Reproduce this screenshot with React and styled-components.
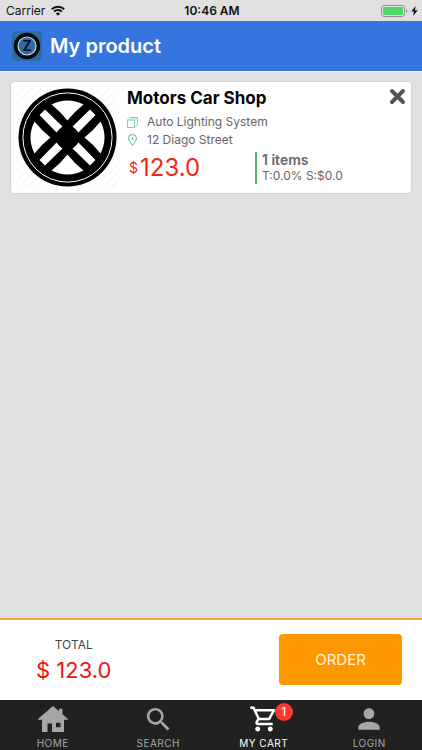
import React from 'react';
import styled, { createGlobalStyle } from 'styled-components';
import { MdOutlineShoppingCart, MdPerson, MdSearch } from 'react-icons/md';

const GlobalStyle = createGlobalStyle`
  * {
    box-sizing: border-box;
  }

  body {
    margin: 0;
    background-color: #e0e0e0;
    font-family: Inter, 'Liberation Sans', sans-serif;
  }
`;

// Mock data for the cart
const cartItems = [
  {
    id: 1,
    name: 'Motors Car Shop',
    category: 'Auto Lighting System',
    address: '12 Diago Street',
    price: 123,
    quantity: 1,
    tax: 0,
    shipping: 0,
  },
];

const Screen = styled.div`
  display: flex;
  flex-direction: column;
  min-height: 100vh;
`;

const StatusBar = styled.div`
  display: grid;
  grid-template-columns: 1fr auto 1fr;
  align-items: center;
  height: 21px;
  padding: 0 4px 0 6px;
  color: #111;
  font-size: 12px;
`;

const StatusGroup = styled.div`
  display: flex;
  align-items: center;
  justify-content: ${(props) => (props.$end ? 'flex-end' : 'flex-start')};
  gap: ${(props) => (props.$end ? '3px' : '6px')};
`;

const Clock = styled.span`
  font-weight: 600;
`;

const Header = styled.header`
  display: flex;
  align-items: center;
  gap: 8px;
  height: 51px;
  padding: 0 12px;
  background-color: #3575e0;
  border-bottom: 1px solid #f0f0f4;
`;

const Title = styled.h1`
  margin: 0;
  color: white;
  font-size: 20px;
  font-weight: 600;
`;

const Content = styled.main`
  flex: 1;
  padding: 10px 11px;
`;

const CardList = styled.ul`
  display: flex;
  flex-direction: column;
  gap: 10px;
  margin: 0;
  padding: 0;
  list-style: none;
`;

const Card = styled.li`
  display: flex;
  gap: 10px;
  padding: 6px 5px 6px 7px;
  background-color: white;
  border-radius: 4px;
  box-shadow: 0 0 1px 1px rgba(0, 0, 0, 0.06);
`;

const CardBody = styled.div`
  display: flex;
  flex: 1;
  flex-direction: column;
`;

const CardTop = styled.div`
  display: flex;
  align-items: flex-start;
  justify-content: space-between;
`;

const ProductName = styled.h2`
  margin: 0;
  color: #080808;
  font-size: 17px;
  font-weight: 700;
  line-height: 20px;
`;

const RemoveButton = styled.button`
  display: flex;
  padding: 0;
  border: 0;
  background: none;
  cursor: pointer;
`;

const InfoList = styled.div`
  display: flex;
  flex-direction: column;
  padding-top: 5px;
`;

const InfoRow = styled.div`
  display: flex;
  align-items: center;
  gap: 9px;
  color: #666;
  font-size: 12px;
  line-height: 18px;
`;

const PriceRow = styled.div`
  display: grid;
  grid-template-columns: 128px 1fr;
  align-items: center;
  padding-top: 3px;
`;

const Price = styled.div`
  display: flex;
  align-items: center;
  gap: 2px;
  padding-left: 2px;
  color: #f22613;
  font-size: 24px;
  line-height: 32px;
`;

const Currency = styled.span`
  font-size: 14px;
`;

const Quantity = styled.div`
  padding-left: 5px;
  border-left: 2px solid #5cb574;
  color: #666;
  font-size: 12px;
  line-height: 16px;
`;

const QuantityCount = styled.strong`
  display: block;
  font-size: 14px;
  font-weight: 600;
`;

const Summary = styled.section`
  display: flex;
  align-items: flex-start;
  justify-content: space-between;
  height: 82px;
  padding: 14px 20px 0 36px;
  background-color: white;
  border-top: 2px solid #f5a343;
`;

const Total = styled.div`
  display: flex;
  flex-direction: column;
  align-items: center;
  padding-top: 2px;
`;

const TotalLabel = styled.span`
  color: #444;
  font-size: 12px;
  line-height: 18px;
`;

const TotalAmount = styled.span`
  color: #f01414;
  font-size: 22px;
  line-height: 32px;
`;

const OrderButton = styled.button`
  width: 123px;
  height: 51px;
  border: 0;
  border-radius: 4px;
  background-color: #ff9800;
  color: #fff3dc;
  font-family: inherit;
  font-size: 15px;
  cursor: pointer;
`;

const TabBar = styled.nav`
  display: grid;
  grid-template-columns: repeat(4, 1fr);
  height: 50px;
  background-color: #212121;
`;

const Tab = styled.a`
  display: flex;
  flex-direction: column;
  align-items: center;
  padding-top: 3px;
  color: ${(props) => (props.$active ? 'white' : '#a6a6a6')};
  font-size: 10px;
  letter-spacing: 0.5px;
  line-height: 16px;
  text-decoration: none;
`;

const TabIcon = styled.span`
  position: relative;
  display: flex;
  align-items: center;
  justify-content: center;
  height: 32px;
`;

const Badge = styled.span`
  position: absolute;
  top: 0;
  right: -14px;
  width: 18px;
  height: 18px;
  border-radius: 9px;
  background-color: #f93a32;
  color: white;
  font-size: 12px;
  letter-spacing: 0;
  line-height: 18px;
  text-align: center;
`;

function WifiIcon() {
  return (
    <svg width="14" height="11" viewBox="0 0 14 11" fill="none" stroke="#111" strokeWidth="2">
      <path d="M0.8 4.2a8.8 8.8 0 0 1 12.4 0" />
      <path d="M3.1 6.6a5.5 5.5 0 0 1 7.8 0" />
      <path d="M7 10.8L4.8 8.6a3.1 3.1 0 0 1 4.4 0z" fill="#111" stroke="none" />
    </svg>
  );
}

function BatteryIcon() {
  return (
    <svg width="27" height="12" viewBox="0 0 27 12">
      <rect x="0.5" y="0.5" width="23" height="11" rx="2.5" fill="#e8e8e8" stroke="#919191" />
      <rect x="2" y="2" width="20" height="8" rx="1" fill="#4cd964" />
      <path d="M25 4v4c1.8-.6 1.8-3.4 0-4z" fill="#919191" />
    </svg>
  );
}

function BoltIcon() {
  return (
    <svg width="7" height="10" viewBox="0 0 7 10" fill="#111">
      <path d="M4.6 0L0.3 5.6h2.7L2.2 10l4.5-5.8H3.9z" />
    </svg>
  );
}

function Logo() {
  return (
    <svg width="30" height="30" viewBox="0 0 30 30">
      <rect width="30" height="30" rx="4" fill="#2e6da4" />
      <circle cx="15" cy="15" r="13.2" fill="#05070c" />
      <circle cx="15" cy="15" r="9" fill="#2f6ba3" stroke="#c4d8ea" strokeWidth="1.2" />
      <text
        x="15"
        y="20"
        fill="#02050a"
        fontFamily="Inter, sans-serif"
        fontSize="14"
        fontWeight="600"
        textAnchor="middle"
      >
        Z
      </text>
    </svg>
  );
}

function WheelImage() {
  return (
    <svg width="99" height="99" viewBox="-49.5 -49.5 99 99" role="img" aria-label="Wheel">
      <defs>
        <pattern
          id="stripes"
          width="6"
          height="6"
          patternUnits="userSpaceOnUse"
          patternTransform="rotate(45)"
        >
          <rect width="6" height="6" fill="#fff" />
          <rect width="1" height="6" fill="#f4f4f4" />
        </pattern>
      </defs>
      <rect x="-49.5" y="-49.5" width="99" height="99" fill="url(#stripes)" />
      <circle r="49" fill="#000" />
      <circle r="44.6" fill="none" stroke="#fff" strokeWidth="1" />
      {[0, 90, 180, 270].map((angle) => (
        <g key={angle} transform={`rotate(${angle})`} fill="#fff">
          <path d="M0 -17Q-6.5 -25.5 -16 -33Q0 -41 16 -33Q6.5 -25.5 0 -17z" />
          <path d="M-28 -22.5L-22.5 -28L-5 -11Q-8.5 -8.5 -11 -5z" />
        </g>
      ))}
    </svg>
  );
}

function CloseIcon() {
  return (
    <svg width="17" height="17" viewBox="0 0 17 17" stroke="#555" strokeWidth="4" strokeLinecap="round">
      <path d="M3 3l11 11M14 3L3 14" />
    </svg>
  );
}

function BoxIcon() {
  return (
    <svg width="11" height="11" viewBox="0 0 11 11" fill="none" stroke="#6fcf97" strokeWidth="0.9">
      <path d="M0.5 3h7v7.5h-7zM0.5 3l2.5-2.5h7.5L7.5 3M10.5 0.5v7.5l-3 2.5M4.5 3l2.5-2.5" />
    </svg>
  );
}

function PinIcon() {
  return (
    <svg width="11" height="12" viewBox="0 0 11 12" fill="none" stroke="#3cb878" strokeWidth="0.9">
      <path d="M5.5 11.4C3.5 8.5 1.5 6.5 1.5 4.5a4 4 0 0 1 8 0c0 2-2 4-4 6.9z" />
      <circle cx="5.5" cy="4.5" r="1" fill="#3cb878" stroke="none" />
    </svg>
  );
}

function HomeIcon() {
  return (
    <svg width="30" height="26" viewBox="0 0 30 26" fill="currentColor">
      <path
        fillRule="evenodd"
        d="M15 0l6 5.2V2.8h3.5v5.5L30 13v.8h-4V26H14v-8.5H9.5V26H4V13.8H0V13zM18 16.8v4.5h4.5v-4.5z"
      />
    </svg>
  );
}

function CartItem({ item }) {
  return (
    <Card>
      <WheelImage />
      <CardBody>
        <CardTop>
          <ProductName>{item.name}</ProductName>
          <RemoveButton type="button" aria-label={`Remove ${item.name}`}>
            <CloseIcon />
          </RemoveButton>
        </CardTop>
        <InfoList>
          <InfoRow>
            <BoxIcon />
            {item.category}
          </InfoRow>
          <InfoRow>
            <PinIcon />
            {item.address}
          </InfoRow>
        </InfoList>
        <PriceRow>
          <Price>
            <Currency>$</Currency>
            {item.price.toFixed(1)}
          </Price>
          <Quantity>
            <QuantityCount>{item.quantity} items</QuantityCount>
            T:{item.tax.toFixed(1)}% S:${item.shipping.toFixed(1)}
          </Quantity>
        </PriceRow>
      </CardBody>
    </Card>
  );
}

function App() {
  const total = cartItems.reduce((sum, item) => sum + item.price * item.quantity, 0);

  return (
    <Screen>
      <GlobalStyle />
      <StatusBar>
        <StatusGroup>
          Carrier
          <WifiIcon />
        </StatusGroup>
        <Clock>10:46 AM</Clock>
        <StatusGroup $end>
          <BatteryIcon />
          <BoltIcon />
        </StatusGroup>
      </StatusBar>
      <Header>
        <Logo />
        <Title>My product</Title>
      </Header>
      <Content>
        <CardList>
          {cartItems.map((item) => (
            <CartItem key={item.id} item={item} />
          ))}
        </CardList>
      </Content>
      <Summary>
        <Total>
          <TotalLabel>TOTAL</TotalLabel>
          <TotalAmount>$ {total.toFixed(1)}</TotalAmount>
        </Total>
        <OrderButton type="button">ORDER</OrderButton>
      </Summary>
      <TabBar>
        <Tab href="#home">
          <TabIcon>
            <HomeIcon />
          </TabIcon>
          HOME
        </Tab>
        <Tab href="#search">
          <TabIcon>
            <MdSearch size={31} />
          </TabIcon>
          SEARCH
        </Tab>
        <Tab href="#cart" $active>
          <TabIcon>
            <MdOutlineShoppingCart size={30} />
            <Badge>{cartItems.length}</Badge>
          </TabIcon>
          MY CART
        </Tab>
        <Tab href="#login">
          <TabIcon>
            <MdPerson size={32} />
          </TabIcon>
          LOGIN
        </Tab>
      </TabBar>
    </Screen>
  );
}

export default App;
